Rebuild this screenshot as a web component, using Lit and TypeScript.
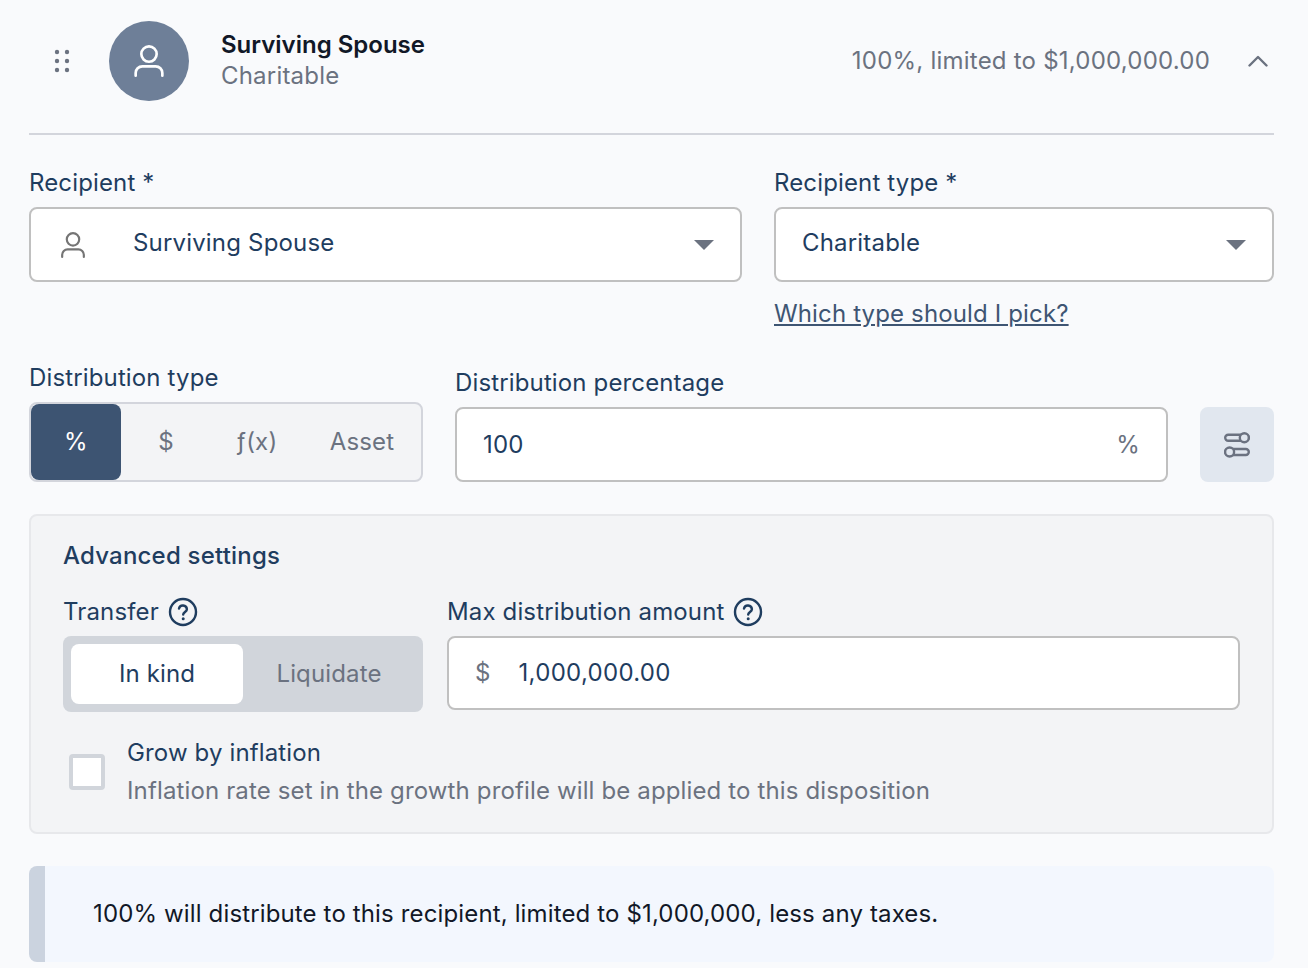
import { LitElement, html, css, svg } from 'lit';
import { customElement } from 'lit/decorators.js';

const personIcon = svg`<circle cx="12" cy="6.800" r="5.750" fill="none" stroke="currentColor" stroke-width="2"/><path d="M2 23v-2a5 5 0 0 1 5-5h10a5 5 0 0 1 5 5v2" fill="none" stroke="currentColor" stroke-width="2" stroke-linecap="round"/>`;

const helpIcon = html`<svg class="help" viewBox="0 0 30 30">
  <circle cx="15" cy="15" r="13" fill="none" stroke="currentColor" stroke-width="2.400"/>
  <path d="M11 11.600a4 4 0 0 1 7.900.6c0 2.600-3.700 3-3.700 5.400" fill="none" stroke="currentColor" stroke-width="2.400" stroke-linecap="round"/>
  <circle cx="15.200" cy="21.800" r="1.500" fill="currentColor"/>
</svg>`;

@customElement('app-root')
export class AppRoot extends LitElement {
  render() {
    return html`
      <div class="page">
        <header class="head">
          <svg class="dots" viewBox="0 0 16 26">
            ${[4, 13, 22].map(y => svg`<circle cx="3" cy=${y} r="2.200"/><circle cx="13" cy=${y} r="2.200"/>`)}
          </svg>
          <div class="avatar"><svg viewBox="0 0 24 24">${personIcon}</svg></div>
          <div class="who">
            <div class="name">Surviving Spouse</div>
            <div class="kind">Charitable</div>
          </div>
          <div class="summary">100%, limited to $1,000,000.00</div>
          <svg class="chevron" viewBox="0 0 20 12"><path d="M1.500 10.500 10 2l8.500 8.500" fill="none" stroke="currentColor" stroke-width="2.400" stroke-linecap="round" stroke-linejoin="round"/></svg>
        </header>

        <div class="row recipients">
          <div class="field grow">
            <label>Recipient *</label>
            <div class="select">
              <svg class="person" viewBox="0 0 24 24">${personIcon}</svg>
              <span class="value indented">Surviving Spouse</span>
              <span class="caret"></span>
            </div>
          </div>
          <div class="field type">
            <label>Recipient type *</label>
            <div class="select">
              <span class="value">Charitable</span>
              <span class="caret"></span>
            </div>
            <a class="link">Which type should I pick?</a>
          </div>
        </div>

        <div class="row dist">
          <div class="field">
            <label>Distribution type</label>
            <div class="seg">
              <span class="on">%</span><span>$</span><span>ƒ(x)</span><span>Asset</span>
            </div>
          </div>
          <div class="field grow">
            <label>Distribution percentage</label>
            <div class="input pct">
              <span class="value">100</span>
              <span class="unit">%</span>
            </div>
          </div>
          <button class="opts">
            <svg viewBox="0 0 26 26" fill="none" stroke="currentColor" stroke-width="2.400">
              <rect x="1.200" y="2.700" width="23.600" height="6" rx="3"/>
              <circle cx="20.300" cy="5.700" r="4.500" fill="#e1e7ef"/>
              <rect x="1.200" y="17" width="23.600" height="6" rx="3"/>
              <circle cx="5.600" cy="20" r="4.500" fill="#e1e7ef"/>
            </svg>
          </button>
        </div>

        <section class="advanced">
          <h3>Advanced settings</h3>
          <div class="adv-row">
            <div class="field">
              <label class="with-help">Transfer ${helpIcon}</label>
              <div class="toggle">
                <span class="on">In kind</span><span>Liquidate</span>
              </div>
            </div>
            <div class="field grow">
              <label class="with-help">Max distribution amount ${helpIcon}</label>
              <div class="input max">
                <span class="unit">$</span>
                <span class="value">1,000,000.00</span>
              </div>
            </div>
          </div>
          <div class="check-row">
            <span class="box"></span>
            <div>
              <div class="check-title">Grow by inflation</div>
              <div class="check-desc">Inflation rate set in the growth profile will be applied to this disposition</div>
            </div>
          </div>
        </section>

        <div class="banner">100% will distribute to this recipient, limited to $1,000,000, less any taxes.</div>
      </div>
    `;
  }

  static styles = css`
    :host {
      display: block;
      font-family: Inter, "Liberation Sans", sans-serif;
      font-size: 24px;
      line-height: 32px;
      letter-spacing: 0.14px;
      color: #1f3d5f;
    }
    * { box-sizing: border-box; }
    .page {
      height: 968px;
      overflow: hidden;
      background: #f9fafc;
      padding: 0 34px 0 29px;
    }
    .head {
      display: flex;
      align-items: center;
      height: 135px;
      padding: 0 6px 12px 25px;
      border-bottom: 2px solid #d3d5dc;
    }
    .dots { width: 16px; height: 26px; fill: #6b7280; flex: none; }
    .avatar {
      width: 80px;
      height: 80px;
      margin-left: 39px;
      border-radius: 50%;
      background: #6e7f98;
      color: #fff;
      display: flex;
      align-items: center;
      justify-content: center;
    }
    .avatar svg { width: 32px; height: 32px; }
    .who { margin-left: 32px; }
    .name { font-weight: 600; color: #111827; letter-spacing: 0; }
    .kind { margin-top: -1px; color: #6b7280; letter-spacing: 0.2px; }
    .summary { margin-left: auto; color: #6b7280; letter-spacing: 0.22px; }
    .chevron { width: 20px; height: 12px; margin-left: 38px; color: #6b7280; flex: none; }

    .row { display: flex; }
    .field { display: flex; flex-direction: column; }
    .grow { flex: 1; min-width: 0; }
    label { display: block; height: 32px; line-height: 32px; }

    .recipients { gap: 32px; margin-top: 32px; }
    .recipients label { margin-bottom: 8px; }
    .type { width: 500px; }
    .select, .input {
      display: flex;
      align-items: center;
      background: #fff;
      border: 2px solid #c0c0c0;
      border-radius: 8px;
    }
    .select { height: 75px; padding: 0 26px; }
    .select .value { margin-bottom: 4px; letter-spacing: 0.18px; }
    .person { width: 26px; height: 26px; margin-left: 3px; color: #757575; flex: none; }
    .value { color: #1f3d5f; }
    .select .indented { margin-left: 47px; }
    .caret {
      margin-left: auto;
      border-left: 10px solid transparent;
      border-right: 10px solid transparent;
      border-top: 10px solid #6b7280;
    }
    .link {
      margin-top: 16px;
      color: #3e5573;
      text-decoration: underline;
    }

    .dist { gap: 32px; margin-top: 32px; align-items: flex-end; }
    .dist label { margin-bottom: 8px; }
    .seg {
      display: grid;
      grid-template-columns: 90px 90px 92px 1fr;
      width: 394px;
      height: 80px;
      border: 2px solid #d3d5dc;
      border-radius: 8px;
      background: #f3f4f6;
      color: #6b7280;
      letter-spacing: 0.2px;
    }
    .seg span { display: flex; align-items: center; justify-content: center; }
    .seg .on { background: #3d5472; color: #fff; border-radius: 8px; }
    .pct { height: 75px; padding: 0 26px; }
    .unit { color: #6b7280; }
    .pct .unit { margin-left: auto; }
    .opts {
      flex: none;
      width: 74px;
      height: 75px;
      padding: 0;
      border: 0;
      border-radius: 8px;
      background: #e1e7ef;
      color: #6b7280;
      display: flex;
      align-items: center;
      justify-content: center;
    }
    .opts svg { width: 26px; height: 26px; }

    .advanced {
      margin-top: 32px;
      height: 320px;
      padding: 24px 32px 0 32px;
      background: #f3f4f6;
      border: 2px solid #e7e8eb;
      border-radius: 8px;
    }
    h3 { margin: 0; font-size: 24px; line-height: 32px; font-weight: 500; letter-spacing: 0.2px; }
    .adv-row { display: flex; gap: 24px; margin-top: 24px; }
    .with-help { display: flex; align-items: center; gap: 9px; margin-bottom: 8px; }
    .help { width: 30px; height: 30px; }
    .toggle {
      display: grid;
      grid-template-columns: 172px 1fr;
      width: 360px;
      height: 76px;
      padding: 8px;
      background: #d1d5db;
      border-radius: 8px;
      color: #6b7280;
    }
    .toggle span { display: flex; align-items: center; justify-content: center; }
    .toggle .on { background: #fff; border-radius: 8px; color: #1f3d5f; }
    .max { height: 74px; padding: 0 26px; gap: 28px; }
    .max .value { letter-spacing: 0.3px; }
    .check-row { display: flex; align-items: center; gap: 22px; margin-top: 25px; padding-left: 6px; }
    .box {
      flex: none;
      width: 36px;
      height: 36px;
      background: #fff;
      border: 4px solid #d1d5db;
      border-radius: 4px;
    }
    .check-desc { margin-top: 6px; color: #6b7280; }

    .banner {
      display: flex;
      align-items: center;
      margin-top: 32px;
      height: 96px;
      padding-left: 48px;
      background: #f3f7fe;
      border-left: 16px solid #cbd3df;
      border-radius: 8px;
      color: #111827;
    }
  `;
}
